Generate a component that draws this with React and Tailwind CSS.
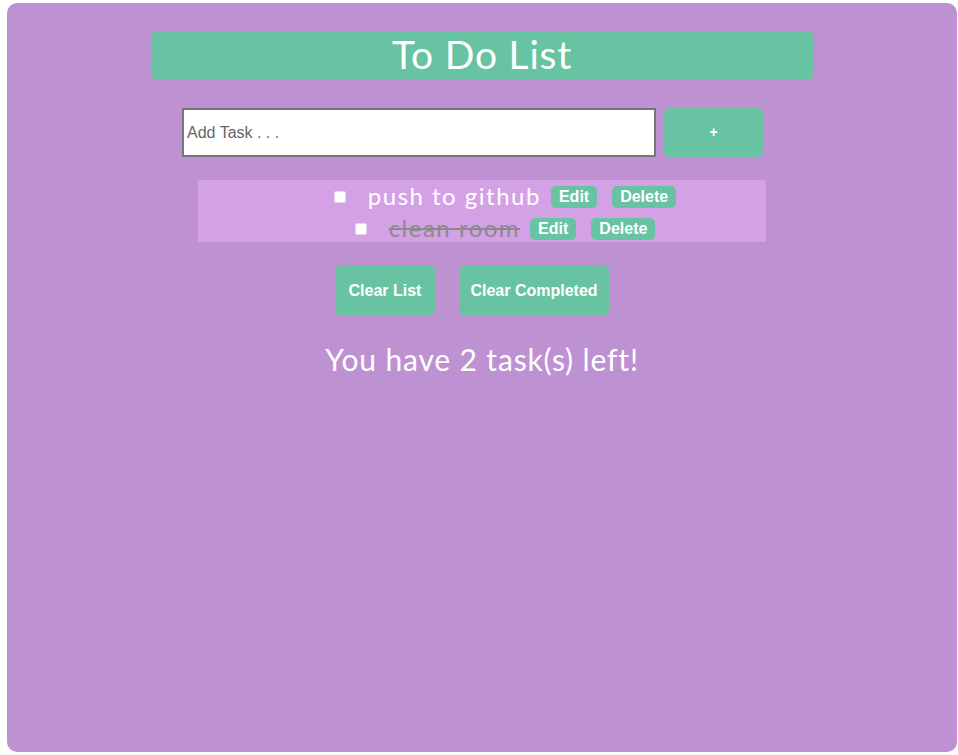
import React from 'react';

const tasks = [
  { text: 'push to github', done: false },
  { text: 'clean room', done: true },
];

const App = () => {
  return (
    <div className="min-h-[755px] bg-white pt-[3px] pl-[7px]">
      <div className="w-[950px] h-[749px] rounded-[10px] bg-[#be91d3] flex flex-col items-center pt-[29px]">
        <div className="w-[663px] h-[47px] rounded-[5px] bg-[#67c3a2] flex items-center justify-center">
          <h1 className="text-white text-[39px] leading-none font-['Lato',sans-serif] tracking-[0.8px] -mt-[2px]">
            To Do List
          </h1>
        </div>

        <div className="flex gap-[8px] mt-[29px] mr-[19px]">
          <input
            type="text"
            placeholder="Add Task . . ."
            className="w-[474px] h-[49px] border-2 border-[#767676] bg-white pl-[3px] text-[16px] font-['Liberation_Sans',Arial,sans-serif] placeholder:text-[#666] text-[#222] outline-none"
          />
          <button className="w-[99px] h-[49px] rounded-[5px] bg-[#67c3a2] text-white font-bold text-[14px] font-['Liberation_Sans',Arial,sans-serif]">
            +
          </button>
        </div>

        <ul className="w-[568px] h-[62px] mt-[23px] bg-[#d4a1e6] pl-[46px] pt-[1px]">
          {tasks.map((task) => (
            <li key={task.text} className="h-[32px] flex items-center justify-center">
              <input
                type="checkbox"
                className="appearance-none w-[12px] h-[12px] mr-[22px] bg-white border border-[#e2d6e8] rounded-[2px]"
              />
              <span
                className={
                  task.done
                    ? "text-[24px] leading-none tracking-[1.5px] font-['Lato',sans-serif] text-[#8a8a8a] line-through -mt-[3px]"
                    : "text-[24px] leading-none tracking-[1.5px] font-['Lato',sans-serif] text-white -mt-[3px]"
                }
              >
                {task.text}
              </span>
              <button className="ml-[10px] h-[22px] px-2 rounded-[5px] bg-[#67c3a2] text-white font-bold text-[16px] leading-none font-['Liberation_Sans',Arial,sans-serif]">
                Edit
              </button>
              <button className="ml-[15px] h-[22px] px-2 rounded-[5px] bg-[#67c3a2] text-white font-bold text-[16px] leading-none font-['Liberation_Sans',Arial,sans-serif]">
                Delete
              </button>
            </li>
          ))}
        </ul>

        <div className="flex gap-[24px] mt-[24px] mr-[20px]">
          <button className="w-[100px] h-[49px] rounded-[5px] bg-[#67c3a2] text-white font-bold text-[16px] font-['Liberation_Sans',Arial,sans-serif]">
            Clear List
          </button>
          <button className="w-[150px] h-[49px] rounded-[5px] bg-[#67c3a2] text-white font-bold text-[16px] font-['Liberation_Sans',Arial,sans-serif]">
            Clear Completed
          </button>
        </div>

        <p className="mt-[29px] text-white text-[30px] leading-none tracking-[0.85px] font-['Lato',sans-serif]">
          You have 2 task(s) left!
        </p>
      </div>
    </div>
  );
};

export default App;
